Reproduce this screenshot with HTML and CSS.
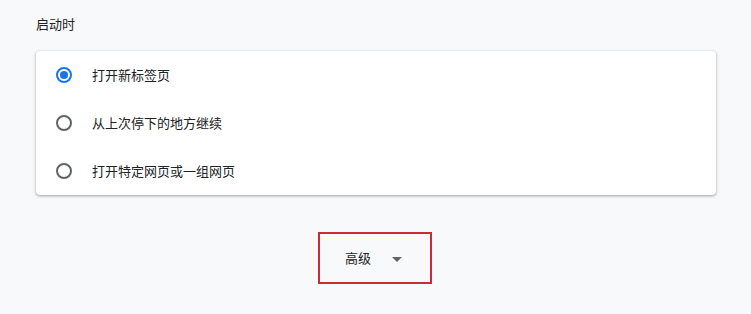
FILE: index.html
```html
<!DOCTYPE html>
<html lang="zh-CN">
<head>
<meta charset="utf-8">
<link rel="stylesheet" href="styles.css">
</head>
<body>
<div class="page">
  <h2 class="section-title">启动时</h2>
  <div class="card">
    <div class="row">
      <span class="radio checked"></span>
      <span class="label">打开新标签页</span>
    </div>
    <div class="row">
      <span class="radio"></span>
      <span class="label">从上次停下的地方继续</span>
    </div>
    <div class="row">
      <span class="radio"></span>
      <span class="label">打开特定网页或一组网页</span>
    </div>
  </div>
  <div class="advanced-wrap">
    <div class="advanced">
      <span class="adv-label">高级</span>
      <svg class="arrow" width="10" height="5" viewBox="0 0 10 5"><path d="M0 0L10 0L5 5Z" fill="#5f6368"/></svg>
    </div>
  </div>
</div>
</body>
</html>
```
FILE: styles.css
```css
html, body {
  margin: 0;
  padding: 0;
  background: #f8f9fa;
}
body {
  font-family: "Noto Sans CJK SC", "Noto Sans", sans-serif;
  font-size: 13px;
  color: #202124;
}
.page {
  padding: 14px 0 0 36px;
  width: 680px;
}
.section-title {
  margin: 0;
  font-size: 13px;
  font-weight: 400;
  line-height: 20px;
  color: #202124;
}
.card {
  margin-top: 17px;
  width: 680px;
  background: #fff;
  border-radius: 4px;
  box-shadow: 0 1px 2px rgba(60,64,67,.3), 0 1px 3px 1px rgba(60,64,67,.15);
}
.row {
  height: 48px;
  display: flex;
  align-items: center;
  padding-left: 20px;
  gap: 20px;
}
.radio {
  box-sizing: border-box;
  width: 16px;
  height: 16px;
  border: 2px solid #5f6368;
  border-radius: 50%;
  display: flex;
  align-items: center;
  justify-content: center;
}
.radio.checked {
  border-color: #1a73e8;
}
.radio.checked::after {
  content: "";
  width: 8px;
  height: 8px;
  border-radius: 50%;
  background: #1a73e8;
}
.label {
  line-height: 20px;
}
.advanced-wrap {
  display: flex;
  justify-content: center;
  margin-top: 37px;
  margin-left: -36px;
  width: 750px;
}
.advanced {
  box-sizing: border-box;
  width: 114px;
  height: 52px;
  border: 2px solid #cc2a36;
  display: flex;
  align-items: center;
  padding-left: 25px;
  gap: 21px;
}
.adv-label {
  line-height: 20px;
}
.arrow {
  display: block;
  margin-top: 2px;
}
```
